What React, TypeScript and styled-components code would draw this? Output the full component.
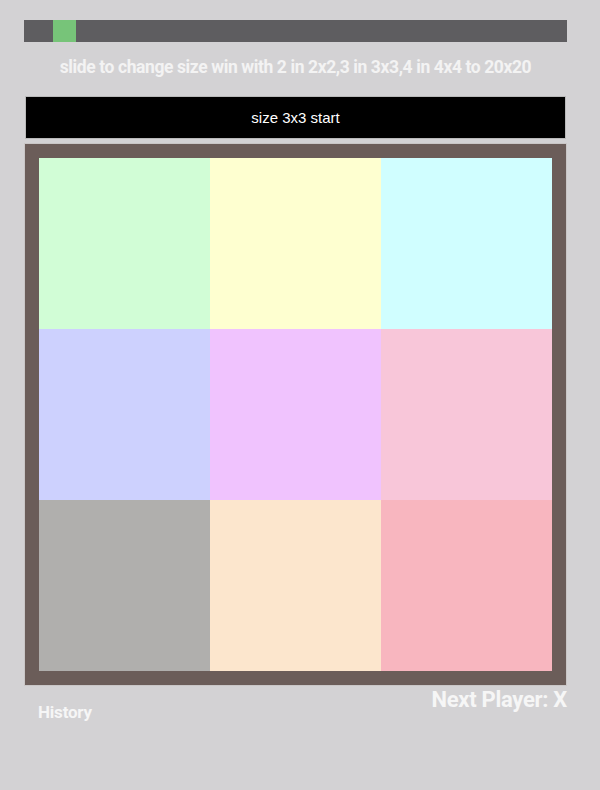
import React, { useState } from "react";
import styled, { createGlobalStyle } from "styled-components";

const Global = createGlobalStyle`
  html, body { margin: 0; padding: 0; background: #d3d2d4; }
  body { font-family: Roboto, "Liberation Sans", sans-serif; }
`;

const Page = styled.div`
  width: 543px;
  padding: 20px 0 0 24px;
  display: flex;
  flex-direction: column;
`;

const Slider = styled.input`
  -webkit-appearance: none;
  appearance: none;
  width: 543px;
  height: 22px;
  margin: 0;
  background: #5e5d60;
  outline: none;
  display: block;
  &::-webkit-slider-thumb {
    -webkit-appearance: none;
    appearance: none;
    width: 23px;
    height: 22px;
    background: #77c479;
    border: none;
    cursor: pointer;
  }
`;

const Hint = styled.div`
  margin-top: 15px;
  text-align: center;
  color: #f3f3f3;
  font-weight: 700;
  font-size: 17.5px;
  letter-spacing: -0.4px;
  line-height: 20px;
`;

const StartButton = styled.button`
  margin: 19px 0 0 1px;
  width: 541px;
  height: 43px;
  background: #000;
  color: #fff;
  border: 1px solid #b9b9b9;
  font-family: "Liberation Sans", Arial, sans-serif;
  font-size: 15px;
  cursor: pointer;
`;

const Board = styled.div<{ $n: number }>`
  margin-top: 4px;
  box-sizing: border-box;
  width: 543px;
  height: 543px;
  padding: 14px;
  background: #6b5d59;
  border: 1px solid #c9c6c6;
  display: grid;
  grid-template-columns: repeat(${(p) => p.$n}, 1fr);
  grid-template-rows: repeat(${(p) => p.$n}, 1fr);
`;

const Cell = styled.div<{ $c: string }>`
  background: ${(p) => p.$c};
`;

const Footer = styled.div`
  display: flex;
  justify-content: space-between;
  align-items: flex-start;
  color: #f6f6f6;
  font-weight: 700;
`;

const History = styled.div`
  margin: 16px 0 0 14px;
  font-size: 17px;
  letter-spacing: -0.2px;
`;

const NextPlayer = styled.div`
  margin: 1px 0 0 0;
  font-size: 22px;
  letter-spacing: -0.3px;
`;

const colors = [
  "#d1fdd6",
  "#feffd0",
  "#d0feff",
  "#cdd1fe",
  "#f0c3fe",
  "#f8c6d9",
  "#b0afad",
  "#fce6cd",
  "#f8b6bf",
];

export default function App() {
  const [size, setSize] = useState(3);
  return (
    <>
      <Global />
      <Page>
        <Slider
          type="range"
          min={2}
          max={20}
          value={size}
          onChange={(e) => setSize(Number(e.target.value))}
        />
        <Hint>slide to change size win with 2 in 2x2,3 in 3x3,4 in 4x4 to 20x20</Hint>
        <StartButton>size 3x3 start</StartButton>
        <Board $n={3}>
          {colors.map((c, i) => (
            <Cell key={i} $c={c} />
          ))}
        </Board>
        <Footer>
          <History>History</History>
          <NextPlayer>Next Player: X</NextPlayer>
        </Footer>
      </Page>
    </>
  );
}
